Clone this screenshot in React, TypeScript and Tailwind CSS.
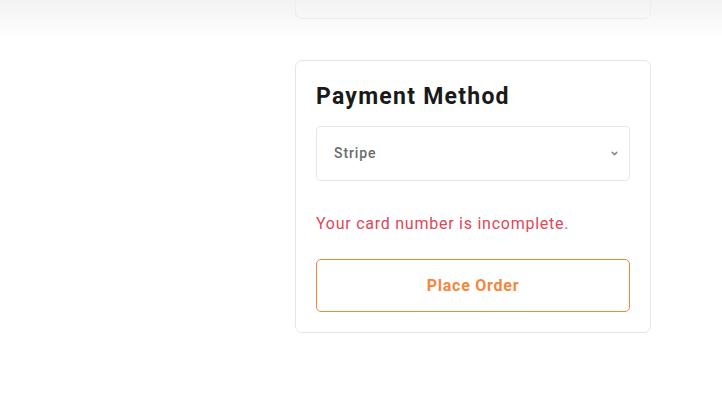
import { ChevronDown } from 'lucide-react';

const App = () => {
	return (
		<div className="relative w-[722px] h-[414px] bg-white overflow-hidden font-['Roboto',sans-serif]">
			<div className="flex flex-col items-start pl-[295px]">
				<div className="w-[356px] h-[20px] -mt-[1px] border border-[#e6e6e6] rounded-b-[7px] bg-white"></div>
				<div className="mt-[41px] w-[356px] border border-[#e6e6e6] rounded-[7px] bg-white px-[20px] pt-[22px] pb-[20px]">
					<h2 className="text-[23px] leading-[28px] font-bold tracking-[1.25px] text-[#1a1a1a]">Payment Method</h2>
					<div className="mt-[15px] h-[55px] flex items-center justify-between border border-[#e6e6e6] rounded-[4px] pl-[17px] pr-[10px]">
						<span className="text-[14px] font-medium tracking-[0.9px] text-[#6b6b6b]">Stripe</span>
						<ChevronDown className="w-[9px] h-[9px] text-[#8a8a8a]" strokeWidth={4} />
					</div>
					<p className="mt-[33px] text-[16px] leading-[20px] tracking-[0.75px] text-[#df4658]">Your card number is incomplete.</p>
					<button className="mt-[25px] w-full h-[53px] border border-[#f4853b] rounded-[5px] text-[16px] font-bold tracking-[0.75px] text-[#f5873d] bg-white">
						Place Order
					</button>
				</div>
			</div>
			<div className="pointer-events-none absolute top-0 left-0 right-0 h-[40px] bg-gradient-to-b from-[#f1f1f1]/90 to-white/0"></div>
		</div>
	);
};

export default App;
